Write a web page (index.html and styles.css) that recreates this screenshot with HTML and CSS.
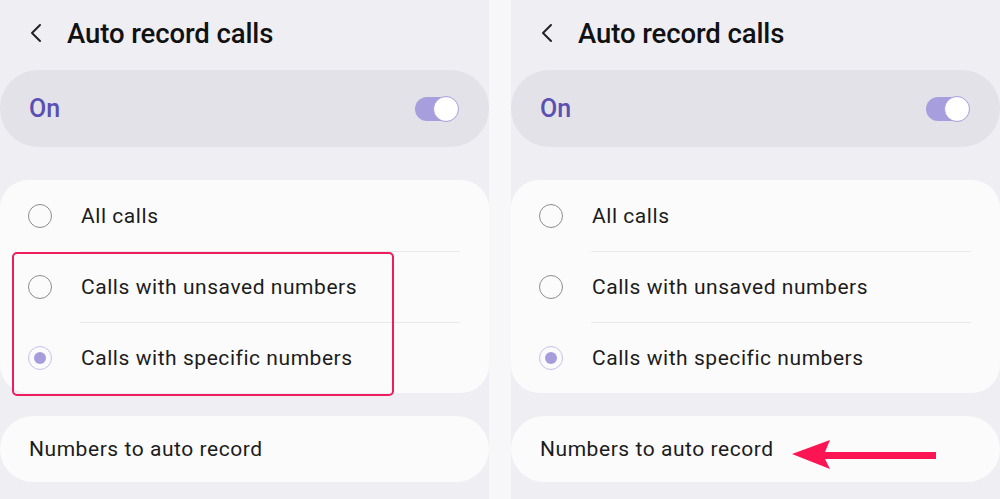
FILE: index.html
```html
<!DOCTYPE html>
<html>
	<head>
		<meta charset="utf-8">
		<title>Auto record calls</title>
		<link rel="stylesheet" href="styles.css">
	</head>
	<body>
		<!-- 左边：选中的两项 -->
		<div class="panel">
			<div class="header">
				<svg class="back" width="14" height="20" viewBox="0 0 14 20">
					<path d="M11 2 L3 10 L11 18" fill="none" stroke="#222" stroke-width="2" stroke-linecap="round" stroke-linejoin="round"/>
				</svg>
				<span class="title">Auto record calls</span>
			</div>
			<div class="master">
				<span class="on">On</span>
				<span class="switch"><span class="knob"></span></span>
			</div>
			<div class="options">
				<div class="row">
					<span class="radio"></span>
					<span class="label">All calls</span>
				</div>
				<div class="row">
					<span class="radio"></span>
					<span class="label">Calls with unsaved numbers</span>
				</div>
				<div class="row">
					<span class="radio checked"></span>
					<span class="label">Calls with specific numbers</span>
				</div>
			</div>
			<div class="numbers">Numbers to auto record</div>
			<div class="highlight"></div>
		</div>

		<!-- 右边：箭头 -->
		<div class="panel">
			<div class="header">
				<svg class="back" width="14" height="20" viewBox="0 0 14 20">
					<path d="M11 2 L3 10 L11 18" fill="none" stroke="#222" stroke-width="2" stroke-linecap="round" stroke-linejoin="round"/>
				</svg>
				<span class="title">Auto record calls</span>
			</div>
			<div class="master">
				<span class="on">On</span>
				<span class="switch"><span class="knob"></span></span>
			</div>
			<div class="options">
				<div class="row">
					<span class="radio"></span>
					<span class="label">All calls</span>
				</div>
				<div class="row">
					<span class="radio"></span>
					<span class="label">Calls with unsaved numbers</span>
				</div>
				<div class="row">
					<span class="radio checked"></span>
					<span class="label">Calls with specific numbers</span>
				</div>
			</div>
			<div class="numbers">Numbers to auto record</div>
			<svg class="arrow" width="146" height="32" viewBox="0 0 146 32">
				<path d="M1 14 L39 0 L34 12 L145 12 L145 19 L34 19 L39 29 Z" fill="#fb1553"/>
			</svg>
		</div>
	</body>
</html>
```

FILE: styles.css
```css
* {
	box-sizing: border-box;
}

body {
	margin: 0;
	width: 1000px;
	height: 499px;
	overflow: hidden;
	display: flex;
	gap: 22px;
	background-color: #f7f7f9;
	font-family: Roboto, "Noto Sans", sans-serif;
	color: #1c1c1c;
}

.panel {
	position: relative;
	width: 489px;
	height: 499px;
	background-color: #efeef3;
	display: flex;
	flex-direction: column;
}

.header {
	display: flex;
	align-items: center;
	height: 66px;
	padding-left: 29px;
}

.back {
	margin-right: 24px;
}

.title {
	font-size: 27.5px;
	font-weight: 500;
	color: #111;
	letter-spacing: -0.1px;
}

.master {
	display: flex;
	align-items: center;
	justify-content: space-between;
	height: 77px;
	margin-top: 4px;
	padding: 0 31px 0 29px;
	border-radius: 38px;
	background-color: #e3e2e8;
}

.on {
	font-size: 25px;
	font-weight: 500;
	color: #5a4fb3;
}

.switch {
	position: relative;
	width: 43px;
	height: 24px;
	border-radius: 12px;
	background-color: #a79fdd;
}

.switch .knob {
	position: absolute;
	right: -1px;
	top: -1px;
	width: 26px;
	height: 26px;
	border-radius: 50%;
	background-color: #fff;
	border: 1.5px solid #a79fdd;
}

.options {
	margin-top: 33px;
	background-color: #fbfbfb;
	border-radius: 28px;
}

.row {
	display: flex;
	align-items: center;
	height: 71px;
	padding-left: 28px;
}

.row + .row {
	position: relative;
}

.row + .row::before {
	content: "";
	position: absolute;
	left: 80px;
	right: 29px;
	top: 0;
	height: 1px;
	background-color: #e9e9eb;
}

.radio {
	width: 24px;
	height: 24px;
	border-radius: 50%;
	border: 1.5px solid #8d8d8d;
	margin-right: 29px;
	display: flex;
	align-items: center;
	justify-content: center;
}

.radio.checked {
	border-color: #c6c1ec;
}

.radio.checked::after {
	content: "";
	width: 12px;
	height: 12px;
	border-radius: 50%;
	background-color: #a69edc;
}

.label {
	font-size: 21px;
	letter-spacing: 0.55px;
	color: #1c1c1c;
}

.numbers {
	margin-top: 23px;
	height: 66px;
	display: flex;
	align-items: center;
	padding-left: 29px;
	font-size: 21px;
	letter-spacing: 0.55px;
	border-radius: 33px;
	background-color: #fbfbfb;
}

/* 红框 */
.highlight {
	position: absolute;
	left: 12px;
	top: 252px;
	width: 382px;
	height: 144px;
	border: 2.5px solid #ee1c5c;
	border-radius: 5px;
}

.arrow {
	position: absolute;
	left: 280px;
	top: 440px;
}
```
